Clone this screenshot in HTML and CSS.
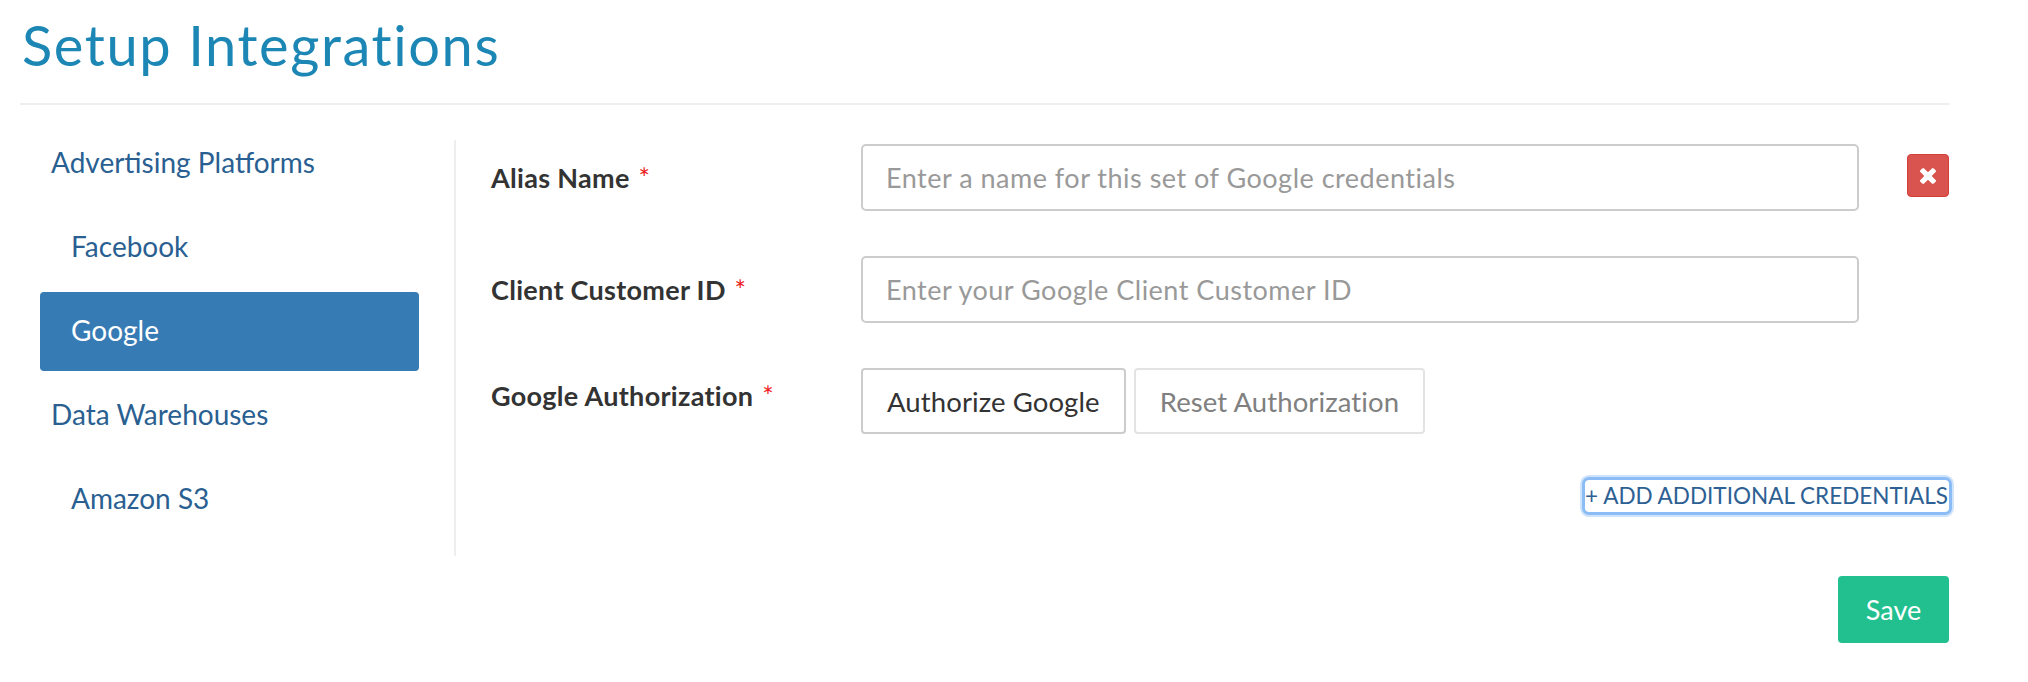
FILE: index.html
```html
<!DOCTYPE html>
<html lang="en">
<head>
<meta charset="utf-8">
<title>Setup Integrations</title>
<link rel="stylesheet" href="styles.css">
</head>
<body>
<div class="page">
  <h1 class="title">Setup Integrations</h1>
  <div class="rule"></div>
  <div class="main">
    <nav class="sidebar">
      <a class="nav-item nav-group">Advertising Platforms</a>
      <a class="nav-item nav-sub">Facebook</a>
      <a class="nav-item nav-sub active">Google</a>
      <a class="nav-item nav-group">Data Warehouses</a>
      <a class="nav-item nav-sub">Amazon S3</a>
    </nav>
    <section class="content">
      <div class="form-grid">
        <label class="field-label">Alias Name <span class="req">*</span></label>
        <input class="field-input" type="text" placeholder="Enter a name for this set of Google credentials">
        <button class="remove-btn" type="button" aria-label="Remove">
          <svg class="remove-icon" viewBox="302 366 1188 1188" width="16" height="16"><path fill="#fff" d="M1490 1322q0 40-28 68l-136 136q-28 28-68 28t-68-28l-294-294-294 294q-28 28-68 28t-68-28l-136-136q-28-28-28-68t28-68l294-294-294-294q-28-28-28-68t28-68l136-136q28-28 68-28t68 28l294 294 294-294q28-28 68-28t68 28l136 136q28 28 28 68t-28 68l-294 294 294 294q28 28 28 68z"/></svg>
        </button>

        <label class="field-label">Client Customer ID <span class="req">*</span></label>
        <input class="field-input" type="text" placeholder="Enter your Google Client Customer ID">
        <span class="spacer"></span>

        <label class="field-label field-label-auth">Google Authorization <span class="req">*</span></label>
        <div class="btn-group">
          <button class="btn btn-default" type="button">Authorize Google</button>
          <button class="btn btn-muted" type="button">Reset Authorization</button>
        </div>
        <span class="spacer"></span>
      </div>
      <div class="add-row">
        <a class="add-link">+ ADD ADDITIONAL CREDENTIALS</a>
      </div>
    </section>
  </div>
  <div class="footer">
    <button class="save-btn" type="button">Save</button>
  </div>
</div>
</body>
</html>
```

FILE: styles.css
```css
* { box-sizing: border-box; }

html, body {
  margin: 0;
  padding: 0;
  background: #ffffff;
}

body {
  font-family: Lato, "Noto Sans", "Liberation Sans", sans-serif;
  color: #333333;
}

.page {
  width: 1929px;
  margin-left: 20px;
}

.title {
  margin: 0;
  padding-top: 14px;
  padding-left: 2px;
  font-size: 56px;
  line-height: 61px;
  font-weight: 400;
  letter-spacing: 1.6px;
  color: #1c87b5;
}

.rule {
  margin-top: 28px;
  height: 2px;
  background: #eeeeee;
}

.main {
  display: flex;
  align-items: flex-start;
  margin-top: 19px;
}

.sidebar {
  width: 434px;
  padding-left: 20px;
  padding-right: 35px;
  display: flex;
  flex-direction: column;
  gap: 5px;
}

.nav-item {
  display: block;
  height: 79px;
  line-height: 77px;
  font-size: 28px;
  color: #2a5f92;
  border-radius: 4px;
  white-space: nowrap;
}

.nav-group { padding-left: 11px; }
.nav-sub { padding-left: 31px; }

.nav-item.active {
  background: #377bb5;
  color: #ffffff;
}

.content {
  flex: 1;
  margin-top: 16px;
  height: 416px;
  border-left: 2px solid #eeeeee;
  padding-left: 35px;
  padding-top: 4px;
}

.form-grid {
  display: grid;
  grid-template-columns: 370px 1fr 90px;
  row-gap: 45px;
  align-items: start;
}

.field-label {
  font-size: 27px;
  font-weight: 700;
  line-height: 32px;
  letter-spacing: 0.3px;
  padding-top: 18px;
  color: #333333;
  white-space: nowrap;
}

.field-label-auth { padding-top: 12px; }

.req {
  color: #ee1c25;
  font-weight: 400;
  margin-left: 2px;
}

.field-input {
  height: 67px;
  width: 100%;
  border: 2px solid #cccccc;
  border-radius: 5px;
  padding: 0 23px;
  font-family: Lato, "Noto Sans", sans-serif;
  font-size: 27px;
  letter-spacing: 0.5px;
  color: #333333;
  background: #ffffff;
  outline: none;
}

.field-input::placeholder { color: #999999; }

.remove-btn {
  justify-self: end;
  margin-top: 10px;
  width: 42px;
  height: 43px;
  padding: 0;
  border: 1px solid #d43f3a;
  border-radius: 4px;
  background: #d9534f;
  display: flex;
  align-items: center;
  justify-content: center;
}

.remove-icon { display: block; }

.btn-group {
  display: flex;
  gap: 8px;
}

.btn {
  height: 66px;
  padding: 0 24px;
  font-family: Lato, "Noto Sans", sans-serif;
  font-size: 27.5px;
  letter-spacing: 0.1px;
  border-radius: 4px;
  background: #ffffff;
}

.btn-default {
  border: 2px solid #cccccc;
  color: #333333;
}

.btn-muted {
  border: 2px solid #e3e3e3;
  color: #808080;
}

.add-row {
  display: flex;
  justify-content: flex-end;
  margin-top: 46px;
}

.add-link {
  display: inline-block;
  height: 32px;
  line-height: 32px;
  padding: 0 1px 0 0;
  font-size: 22.5px;
  color: #2d6093;
  border-radius: 4px;
  box-shadow: 0 0 0 3px #8bbcf6, 0 0 0 5px #cfe3fb;
  white-space: nowrap;
}

.footer {
  display: flex;
  justify-content: flex-end;
  margin-top: 20px;
}

.save-btn {
  width: 111px;
  height: 67px;
  border: none;
  border-radius: 4px;
  background: #23c08f;
  color: #ffffff;
  font-family: Lato, "Noto Sans", sans-serif;
  font-size: 27px;
}
```
